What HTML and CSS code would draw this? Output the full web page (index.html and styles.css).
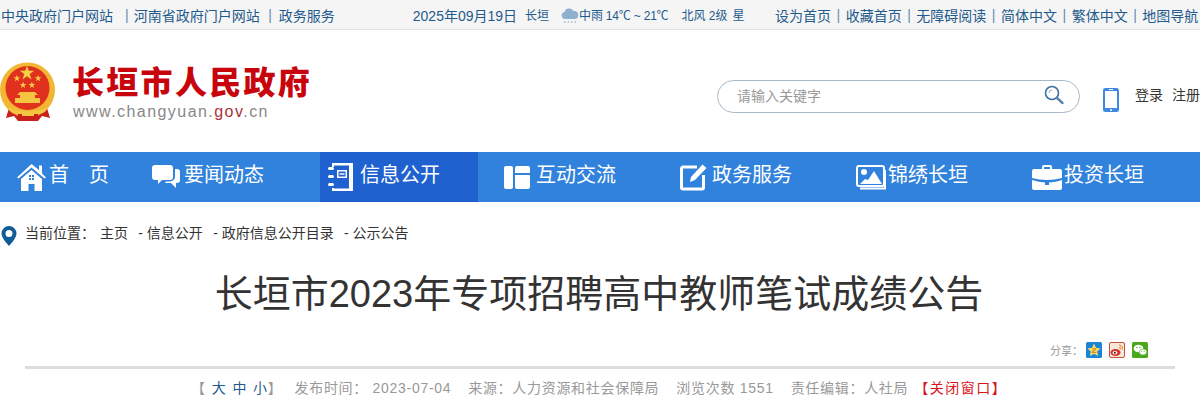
FILE: index.html
```
<!DOCTYPE html>
<html lang="zh-CN">
<head>
    <meta charset="utf-8">
    <title>长垣市2023年专项招聘高中教师笔试成绩公告</title>
    <link rel="stylesheet" href="styles.css">
</head>
<body>
    <div class="topbar">
        <div class="top-links">
            <a>中央政府门户网站</a>
            <span class="sep sep-first">|</span>
            <a>河南省政府门户网站</a>
            <span class="sep sep-second">|</span>
            <a>政务服务</a>
        </div>
        <div class="top-date">2025年09月19日</div>
        <div class="weather">
            <span>长垣</span>
            <svg class="weather-icon" width="18" height="18" viewBox="0 0 18 18">
                <path d="M4 13a3.500 3.500 0 0 1-.6-6.900A5 5 0 0 1 12.500 5a4 4 0 0 1 1.500 8z" fill="#8fb0cf"/>
                <path d="M3.500 17l.5-2M7 17l.5-2M10.500 17l.5-2M14 17l.5-2" stroke="#9db6cc" stroke-width="1"/>
            </svg>
            <span class="weather-text">中雨 14℃ ~ 21℃</span>
            <span class="weather-wind">北风 2级</span>
            <span class="weather-day">星期五</span>
        </div>
        <div class="top-links top-right">
            <a>设为首页</a><span class="sep">|</span>
            <a>收藏首页</a><span class="sep">|</span>
            <a>无障碍阅读</a><span class="sep">|</span>
            <a>简体中文</a><span class="sep">|</span>
            <a>繁体中文</a><span class="sep">|</span>
            <a>地图导航</a>
        </div>
    </div>

    <div class="header">
        <svg class="emblem" width="56" height="60" viewBox="0 0 56 60">
            <defs>
                <path id="star" d="M0-5l1.200 3.500h3.600l-3 2.200 1.200 3.600L0 2.100l-3 2.200 1.200-3.600-3-2.200h3.600z" fill="#f8cf45"/>
            </defs>
            <path d="M9 46L6 56l8-2 4 5h20l4-5 8 2-3-10z" fill="#c9201c"/>
            <circle cx="27.500" cy="28" r="27.500" fill="#f2b632"/>
            <circle cx="27.500" cy="26" r="22" fill="#e0301e"/>
            <use href="#star" x="27" y="11" transform="translate(-13.500 -5.500) scale(1.500)"/>
            <use href="#star" x="17" y="16" transform="translate(5 5) scale(.7)"/>
            <use href="#star" x="38" y="16" transform="translate(11.500 5) scale(.7)"/>
            <use href="#star" x="23" y="23" transform="translate(7 7) scale(.7)"/>
            <use href="#star" x="32" y="23" transform="translate(9.500 7) scale(.7)"/>
            <path d="M20 30h15l3 3h-3v3h5v5H15v-5h5v-3h-3z" fill="#f5c542"/>
            <path d="M8 45q20 9 40 0l-3 5q-17 7-34 0z" fill="#f5c542"/>
            <path d="M18 52h20v7H18z" fill="#c9201c"/>
            <path d="M22 49h12v5H22z" fill="#f5c542"/>
        </svg>
        <div class="brand">
            <div class="brand-name">长垣市人民政府</div>
            <div class="brand-url">www.changyuan.<span class="brand-gov">gov</span>.cn</div>
        </div>
        <div class="search">
            <span class="search-hint">请输入关键字</span>
            <svg class="search-icon" width="20" height="20" viewBox="0 0 20 20" fill="none">
                <circle cx="8" cy="8" r="6.500" stroke="#3d6f9c" stroke-width="1.600"/>
                <path d="M5 8a3 3 0 0 1 3-3" stroke="#8fb0cf" stroke-width="1"/>
                <path d="M13 13l5.500 5" stroke="#5a86ad" stroke-width="2.400" stroke-linecap="round"/>
            </svg>
        </div>
        <svg class="phone" width="16" height="24" viewBox="0 0 16 24">
            <rect width="16" height="24" rx="2.500" fill="#3f8ae0"/>
            <rect x="2" y="3" width="12" height="17" fill="#fff"/>
            <rect x="6" y="1" width="4" height="1" fill="#fff"/>
            <circle cx="8" cy="22" r="1" fill="#fff"/>
        </svg>
        <div class="user-links"><a>登录</a><a>注册</a></div>
    </div>

    <div class="nav">
        <a class="nav-item nav-home">
            <span class="nav-icon">
                <svg width="29" height="27" viewBox="0 0 29 27" fill="#fff">
                    <path d="M14.500 0L0 13.500l1.500 1L14.500 3.500l13 11 1.500-1-4-4V1.500h-3v4.500z"/>
                    <path d="M14.500 6L4 15v12h7.500v-7h6v7H25V15zM12 11h2v2h-2zm3 0h2v2h-2zm-3 3h2v2h-2zm3 0h2v2h-2z" fill-rule="evenodd"/>
                </svg>
            </span>
            <span class="nav-text">首　页</span>
        </a>
        <a class="nav-item">
            <span class="nav-icon">
                <svg width="28" height="24" viewBox="0 0 28 24" fill="#fff">
                    <path d="M3 0h15a3 3 0 0 1 3 3v9a3 3 0 0 1-3 3h-8l-4 4v-4H3a3 3 0 0 1-3-3V3a3 3 0 0 1 3-3z"/>
                    <path d="M23 4h2a3 3 0 0 1 3 3v8a3 3 0 0 1-3 3h-1v5l-5-5h-6l1-1.500h4a5 5 0 0 0 5-5z"/>
                </svg>
            </span>
            <span class="nav-text">要闻动态</span>
        </a>
        <a class="nav-item nav-active">
            <span class="nav-icon">
                <svg width="25" height="28" viewBox="0 0 25 28" fill="#fff">
                    <path fill-rule="evenodd" d="M4 0h21v28H4v-3h2v.500h15V2.500H6V4H4zM9 7h10v8H9zm1.500 1.500v5h7v-5z"/>
                    <rect x="11.500" y="10.300" width="5" height="1.400"/>
                    <rect y="4" width="6" height="3" rx="1.500"/>
                    <rect y="12" width="6" height="3" rx="1.500"/>
                    <rect y="20" width="6" height="3" rx="1.500"/>
                </svg>
            </span>
            <span class="nav-text">信息公开</span>
        </a>
        <a class="nav-item">
            <span class="nav-icon">
                <svg width="26" height="23" viewBox="0 0 26 23" fill="#fff">
                    <rect width="9" height="23" rx="2"/>
                    <path d="M11 2a2 2 0 0 1 2-2h11a2 2 0 0 1 2 2v5H11zM11 9h15v12a2 2 0 0 1-2 2H13a2 2 0 0 1-2-2z"/>
                </svg>
            </span>
            <span class="nav-text">互动交流</span>
        </a>
        <a class="nav-item">
            <span class="nav-icon">
                <svg width="27" height="28" viewBox="0 0 27 28" fill="none">
                    <path d="M17 4H3a1.500 1.500 0 0 0-1.500 1.500v19A1.500 1.500 0 0 0 3 26h19a1.500 1.500 0 0 0 1.500-1.500V12" stroke="#fff" stroke-width="3"/>
                    <path d="M10 19l1-5L22.500 1.500l4 3.500L15 17z" fill="#fff"/>
                </svg>
            </span>
            <span class="nav-text">政务服务</span>
        </a>
        <a class="nav-item">
            <span class="nav-icon">
                <svg width="30" height="25" viewBox="0 0 30 25" fill="none">
                    <rect x="1" y="1" width="27" height="20" rx="2" stroke="#fff" stroke-width="2"/>
                    <path d="M4 23.500h25V5" stroke="#fff" stroke-width="2"/>
                    <circle cx="8" cy="7" r="3" fill="#fff"/>
                    <path d="M4 19l5-5 3 1 6-9 8 13z" fill="#fff"/>
                </svg>
            </span>
            <span class="nav-text">锦绣长垣</span>
        </a>
        <a class="nav-item">
            <span class="nav-icon">
                <svg width="30" height="25" viewBox="0 0 30 25" fill="#fff">
                    <path fill-rule="evenodd" d="M10 5V2a2 2 0 0 1 2-2h6a2 2 0 0 1 2 2v3zm2-3v2h6V2z"/>
                    <path d="M2 4h26a2 2 0 0 1 2 2v7q-15 4-30 0V6a2 2 0 0 1 2-2zM0 15q7 2 13 2.500V20h4v-2.500q7-.5 13-2.500v8a2 2 0 0 1-2 2H2a2 2 0 0 1-2-2z"/>
                </svg>
            </span>
            <span class="nav-text">投资长垣</span>
        </a>
    </div>

    <div class="crumbs">
        <svg class="crumb-pin" width="16" height="20" viewBox="0 0 16 20">
            <path fill-rule="evenodd" d="M8 0a7.500 7.500 0 0 1 7.500 7.500Q15.500 12 8 20 .5 12 .5 7.500A7.500 7.500 0 0 1 8 0zm0 4a3.500 3.500 0 1 0 0 7 3.500 3.500 0 0 0 0-7z" fill="#0f5c96"/>
        </svg>
        <span class="crumb-label">当前位置：</span>
        <a>主页</a>
        <a>- 信息公开</a>
        <a>- 政府信息公开目录</a>
        <a>- 公示公告</a>
    </div>

    <h1 class="title">长垣市2023年专项招聘高中教师笔试成绩公告</h1>

    <div class="share">
        <span class="share-label">分享：</span>
        <svg width="16" height="16" viewBox="0 0 16 16">
            <rect width="16" height="16" rx="1.500" fill="#1a85d6"/>
            <path d="M8 1.500l2 4.300 4.600.6-3.400 3.100.9 4.600L8 11.800l-4.100 2.300.9-4.600L1.400 6.400 6 5.800z" fill="#f7dc6a"/>
            <path d="M5.800 6.200h4.400v1L7.500 10h2.800v1H5.700v-1l2.700-2.800H5.800z" fill="#d98a1c"/>
        </svg>
        <svg width="16" height="16" viewBox="0 0 16 16">
            <rect x=".5" y=".5" width="15" height="15" rx="1.500" fill="#f6e9dc" stroke="#c4503a"/>
            <ellipse cx="6.500" cy="10.500" rx="5" ry="3.500" fill="#d8302a"/>
            <ellipse cx="6" cy="10.700" rx="2.500" ry="1.800" fill="#fff"/>
            <circle cx="5.800" cy="10.800" r="1" fill="#222"/>
            <path d="M10 3a4 4 0 0 1 3.500 4.500M10 5.500a1.800 1.800 0 0 1 1.500 2" fill="none" stroke="#e8892c" stroke-width="1.100"/>
        </svg>
        <svg width="16" height="16" viewBox="0 0 16 16">
            <rect width="16" height="16" rx="1.500" fill="#4aa81c"/>
            <ellipse cx="6.500" cy="6.500" rx="4.800" ry="3.800" fill="#fff"/>
            <ellipse cx="11" cy="10" rx="3.800" ry="3" fill="#fff" stroke="#4aa81c" stroke-width=".6"/>
            <circle cx="5" cy="5.500" r=".7" fill="#4aa81c"/>
            <circle cx="8" cy="5.500" r=".7" fill="#4aa81c"/>
            <circle cx="9.800" cy="9.500" r=".5" fill="#4aa81c"/>
            <circle cx="12.200" cy="9.500" r=".5" fill="#4aa81c"/>
        </svg>
    </div>

    <div class="info-bar">
        <span class="font-size">【 <a>大</a> <a>中</a> <a>小</a>】</span>
        <span>发布时间： 2023-07-04</span>
        <span>来源：人力资源和社会保障局</span>
        <span>浏览次数 1551</span>
        <span>责任编辑：人社局</span>
        <a class="close-link">【关闭窗口】</a>
    </div>
</body>
</html>
```

FILE: styles.css
```
* {
    box-sizing: border-box;
}

html, body {
    height: 400px;
    overflow: hidden;
}

body {
    margin: 0;
    background: #fff;
    font-family: "Liberation Sans", "Noto Sans CJK SC", sans-serif;
    color: #333;
}

.topbar {
    display: flex;
    align-items: center;
    height: 30px;
    padding-left: 1px;
    background: #f5f5f5;
    border-bottom: 1px solid #e3e3e3;
    font-size: 14px;
    color: #1f5a8c;
    white-space: nowrap;
}

.top-links {
    display: flex;
    flex: none;
    align-items: center;
}

.sep {
    margin: 0 5.500px;
    color: #5f8db3;
}

.sep-first {
    margin: 0 5px 0 12px;
}

.sep-second {
    margin: 0 7px 0 8.500px;
}

.top-date {
    flex: none;
    margin-left: 78px;
}

.weather {
    display: flex;
    flex: none;
    align-items: center;
    width: 220px;
    margin-left: 8px;
    overflow: hidden;
    font-size: 12px;
}

.weather > * {
    flex: none;
}

.weather-icon {
    margin-left: 12px;
}

.weather-text {
    letter-spacing: -.2px;
}

.weather-wind {
    margin-left: 13px;
}

.weather-day {
    margin-left: 5px;
}

.top-right {
    margin-left: 30px;
}

.header {
    display: flex;
    align-items: center;
    height: 122px;
}

.emblem {
    flex: none;
    margin-top: 1px;
}

.brand {
    width: 645px;
    margin: 2px 0 0 16px;
}

.brand-name {
    font-size: 32px;
    font-weight: 900;
    line-height: 38px;
    letter-spacing: 2.300px;
    color: #c8040c;
}

.brand-url {
    margin-top: 1px;
    padding-left: 1px;
    font-size: 16px;
    line-height: 18px;
    letter-spacing: 1.450px;
    color: #888;
}

.brand-gov {
    color: #a8333a;
}

.search {
    display: flex;
    flex: none;
    align-items: center;
    justify-content: space-between;
    width: 363px;
    height: 33px;
    margin-top: 11px;
    padding: 0 15px 3px 19px;
    border: 1px solid #a9b8c8;
    border-radius: 17px;
}

.search-hint {
    font-size: 14px;
    color: #999;
}

.phone {
    flex: none;
    margin: 18px 0 0 23px;
}

.user-links {
    display: flex;
    flex: none;
    gap: 9px;
    margin: 6px 0 0 16px;
    font-size: 14px;
}

.nav {
    display: flex;
    gap: 18px;
    height: 50px;
    background: #3182dc;
}

.nav-item {
    display: flex;
    align-items: center;
    width: 158px;
    padding-left: 8px;
    color: #fff;
}

.nav-home {
    width: 126px;
    padding-left: 17px;
}

.nav-active {
    background: #1f62cf;
}

.nav-icon {
    display: flex;
    flex: none;
    width: 32px;
}

.nav-text {
    margin-bottom: 8px;
    font-size: 20px;
}

.crumbs {
    display: flex;
    align-items: center;
    height: 60px;
    padding-left: 1px;
    font-size: 14px;
}

.crumb-pin {
    margin-top: 8px;
}

.crumbs a {
    margin-right: 10.300px;
}

.crumb-label {
    margin: 0 5px 0 8px;
}

.title {
    margin: 4px 0 0;
    padding-right: 2px;
    font-size: 38px;
    font-weight: 400;
    line-height: 57px;
    text-align: center;
}

.share {
    display: flex;
    align-items: center;
    gap: 7px;
    height: 30px;
    margin-top: 12px;
    padding-left: 1050px;
}

.share-label {
    width: 29px;
    font-size: 11px;
    color: #999;
    white-space: nowrap;
}

.info-bar {
    display: flex;
    gap: 17px;
    margin: 1px 25px 0;
    padding: 10px 0 0 166px;
    border-top: 3px solid #ddd;
    font-size: 14px;
    line-height: 18px;
    letter-spacing: .7px;
    color: #999;
    white-space: nowrap;
}

.font-size {
    margin-right: -5px;
    word-spacing: 1.400px;
}

.font-size a {
    color: #1f5a8c;
}

.close-link {
    margin-left: -11px;
    letter-spacing: 1.500px;
    color: #d8141c;
}
```
